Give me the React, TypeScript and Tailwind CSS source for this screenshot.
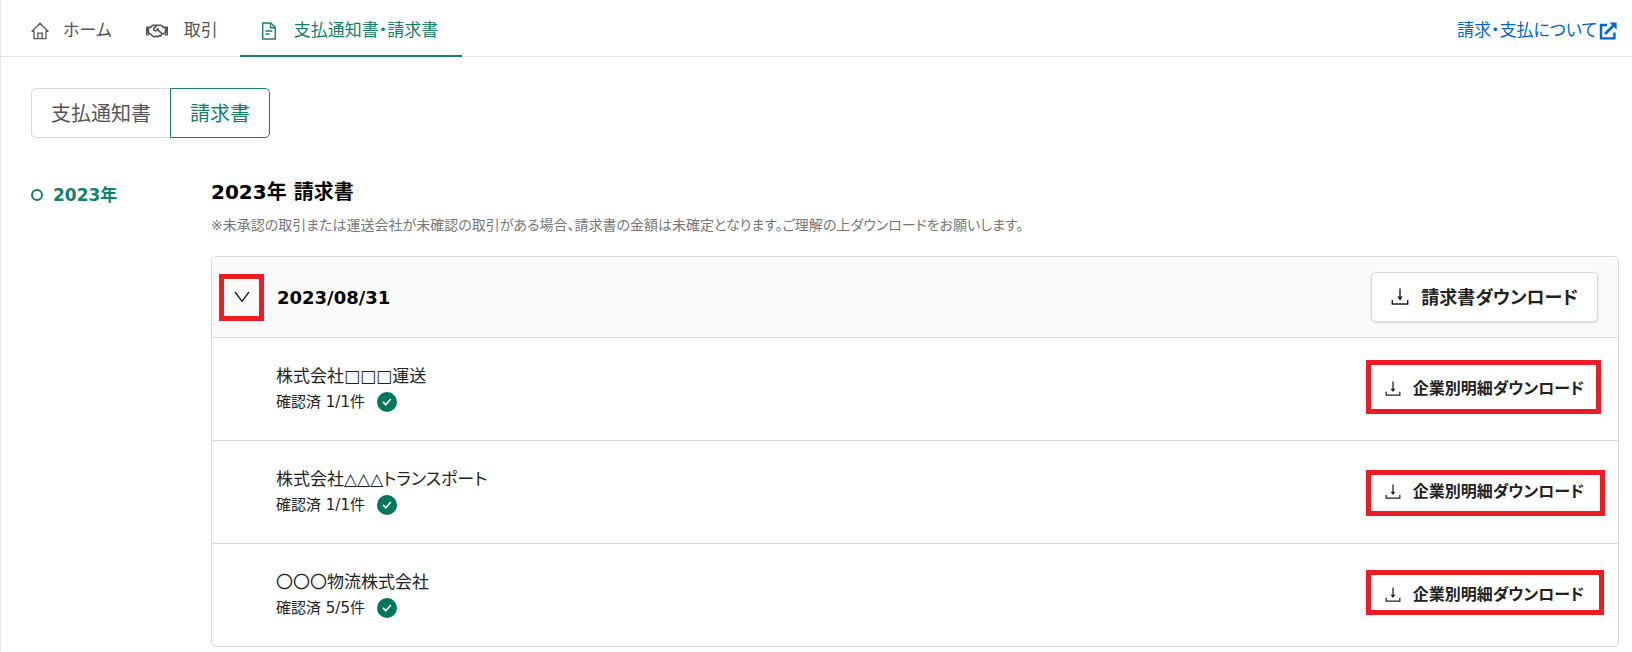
import { FaRegHandshake } from "react-icons/fa";

type Company = { name: string; confirmed: string; mark: string };

const companies: Company[] = [
  { name: "株式会社□□□運送", confirmed: "1/1", mark: "-top-[6px] h-[54px] w-[235px]" },
  { name: "株式会社△△△トランスポート", confirmed: "1/1", mark: "top-px h-[46px] w-[239px]" },
  { name: "〇〇〇物流株式会社", confirmed: "5/5", mark: "-top-[2px] h-[45px] w-[238px]" },
];

function HomeIcon() {
  return (
    <svg viewBox="0 0 18 18" className="size-[18px] shrink-0" fill="none" stroke="currentColor" strokeWidth="1.3" aria-hidden="true">
      <path d="M3 9.3H1L9 1.3l8 8h-2V16.6H3z" strokeLinejoin="round" />
      <path d="M6.8 16.6v-5.4h4.4v5.4" />
    </svg>
  );
}

function FileIcon() {
  return (
    <svg viewBox="0 0 16 18" className="h-[18px] w-4 shrink-0" fill="none" stroke="currentColor" strokeWidth="1.4" aria-hidden="true">
      <path d="M1.7 1h8.2l4.4 4.4V17H1.7z" strokeLinejoin="round" />
      <path d="M9.5 1v4.8h4.8M4.5 9h6.8M4.5 12h4" />
    </svg>
  );
}

function ExternalIcon() {
  return (
    <svg viewBox="0 0 18 18" className="size-[18px] shrink-0" fill="none" stroke="currentColor" aria-hidden="true">
      <path d="M8 3H2v13.4h13.4V10.4" strokeWidth="2.4" />
      <path d="M6 12L14.5 3.5" strokeWidth="2.6" />
      <path d="M10.5 0.6H17.6V7.7z" fill="currentColor" stroke="none" />
    </svg>
  );
}

function DownloadIcon({ className }: { className: string }) {
  return (
    <svg viewBox="0 0 18 18" className={className} fill="none" stroke="currentColor" strokeWidth="1.4" aria-hidden="true">
      <path d="M9 .5v9" />
      <path d="M6.2 8.6h5.6L9 12.4z" fill="currentColor" stroke="none" />
      <path d="M1.3 12v4h15.4v-4" />
    </svg>
  );
}

function ChevronIcon() {
  return (
    <svg viewBox="0 0 16 12" className="h-3 w-4" fill="none" stroke="currentColor" strokeWidth="1.4" aria-hidden="true">
      <path d="M1 1l7 9.3L15 1" />
    </svg>
  );
}

function CheckBadge() {
  return (
    <svg viewBox="0 0 20 20" className="size-5 shrink-0" aria-hidden="true">
      <circle cx="10" cy="10" r="10" fill="#00775b" />
      <path
        d="M6 9.8l2.8 3L13.8 7"
        fill="none"
        stroke="#fff"
        strokeWidth="1.7"
      />
    </svg>
  );
}

function CompanyRow({ company }: { company: Company }) {
  return (
    <li className="flex h-[103px] items-center justify-between border-t border-[#d9d9d9] pr-[34px] pl-16">
      <div>
        <p className="text-[17px] leading-[26px]">{company.name}</p>
        <p className="flex items-center gap-3 text-[15px] leading-[26px]">
          <span>確認済 {company.confirmed}件</span>
          <CheckBadge />
        </p>
      </div>
      <div className="relative">
        <button
          type="button"
          className="flex h-[46px] items-center gap-3 text-[16px] font-bold"
        >
          <DownloadIcon className="size-4 shrink-0" />
          企業別明細ダウンロード
        </button>
        <span
          className={`pointer-events-none absolute -left-[19px] border-[5px] border-[#ed1c24] ${company.mark}`}
        />
      </div>
    </li>
  );
}

export default function App() {
  return (
    <div className="min-h-screen border-l border-[#e5e5e5] bg-white font-['DejaVu_Sans','Noto_Sans_CJK_JP',sans-serif] text-[#222] [font-feature-settings:'palt']">
      <header className="flex h-[57px] items-stretch justify-between border-b border-[#e5e5e5] pr-[15px] text-[17px]">
        <nav className="flex text-[#555]">
          <a href="#home" className="flex items-center gap-[14px] pt-[6px] pr-[26px] pl-[30px]">
            <HomeIcon />
            ホーム
          </a>
          <a href="#deals" className="flex items-center gap-4 pt-[6px] pr-[22px] pl-2">
            <FaRegHandshake className="size-[22px]" />
            取引
          </a>
          <a
            href="#invoices"
            className="-mb-px flex items-center gap-[17px] border-b-2 border-[#12816a] pt-[7px] pr-6 pl-[21px] text-[#12816a]"
          >
            <FileIcon />
            支払通知書・請求書
          </a>
        </nav>
        <a href="#about" className="flex items-center gap-[2px] pt-[6px] text-[#0066d6]">
          請求・支払について
          <ExternalIcon />
        </a>
      </header>

      <div className="flex px-[30px] pt-[31px] text-[20px]">
        <button
          type="button"
          className="h-[50px] rounded-l-[5px] border border-r-0 border-[#d9d9d9] px-[19px] pt-[2px] text-[#555]"
        >
          支払通知書
        </button>
        <button
          type="button"
          className="h-[50px] rounded-r-[5px] border border-[#12816a] px-[19px] pt-[2px] text-[#12816a]"
        >
          請求書
        </button>
      </div>

      <div className="flex pt-[38px] pr-[13px] pl-[30px]">
        <aside className="w-[180px] shrink-0">
          <a
            href="#2023"
            className="flex items-center gap-[10px] pt-[5px] text-[17px] leading-[28px] font-bold text-[#12816a]"
          >
            <span className="size-3 rounded-full border-2 border-[#12816a]" />
            2023年
          </a>
        </aside>
        <main className="min-w-0 flex-1">
          <h1 className="pt-px text-[20px] leading-[30px] font-bold text-black">
            2023年 請求書
          </h1>
          <p className="mt-1 text-[14px] leading-[28px] text-[#777]">
            ※未承認の取引または運送会社が未確認の取引がある場合、請求書の金額は未確定となります。ご理解の上ダウンロードをお願いします。
          </p>
          <section className="mt-[17px] overflow-hidden rounded-[5px] border border-[#d9d9d9]">
            <div className="flex h-20 items-center justify-between bg-[#fafafa] pr-5 pl-[7px]">
              <div className="flex items-center gap-[13px]">
                <button
                  type="button"
                  aria-label="明細を開閉"
                  className="flex h-[47px] w-[45px] items-center justify-center border-[5px] border-[#ed1c24]"
                >
                  <ChevronIcon />
                </button>
                <h2 className="text-[18px] font-bold text-black">2023/08/31</h2>
              </div>
              <button
                type="button"
                className="flex h-[50px] items-center gap-3 rounded-[5px] border border-[#d9d9d9] bg-white px-[19px] text-[18px] font-bold shadow-sm"
              >
                <DownloadIcon className="size-[18px] shrink-0" />
                請求書ダウンロード
              </button>
            </div>
            <ul>
              {companies.map((company) => (
                <CompanyRow key={company.name} company={company} />
              ))}
            </ul>
          </section>
        </main>
      </div>
    </div>
  );
}
